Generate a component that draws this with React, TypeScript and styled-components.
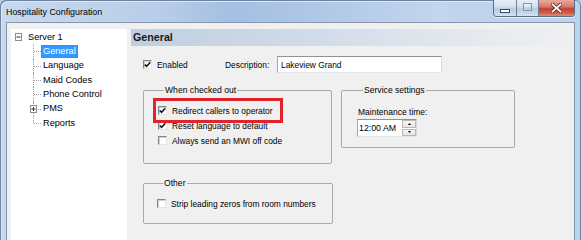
import React from 'react';
import styled, { createGlobalStyle } from 'styled-components';

const Global = createGlobalStyle`
  html, body { margin: 0; padding: 0; background: #b9cfe9; }
  body { font-family: "Liberation Sans", Arial, sans-serif; color: #000; }
  * { box-sizing: border-box; }
`;

const Window = styled.div`
  width: 581px;
  height: 240px;
  overflow: hidden;
  display: flex;
  flex-direction: column;
  padding: 0 6px;
  border-radius: 6px 6px 0 0;
  background: linear-gradient(to right, #c6d9ef 0%, #b8cde9 28%, #a3bfe2 40%, #aec6e6 52%, #c0d5ee 75%, #bcd2ed 100%);
  box-shadow: inset 1px 1px 0 #6f839c, inset -1px 0 0 #6f839c, inset 2px 2px 0 #dce8f5;
`;

const TitleBar = styled.div`
  height: 22px;
  flex: none;
  display: flex;
  align-items: flex-start;
`;

const Title = styled.div`
  padding-top: 7px;
  font-size: 8.9px;
  line-height: 10px;
  color: #000;
`;

const CaptionButtons = styled.div`
  margin-left: auto;
  display: flex;
  height: 17px;
  border: 1px solid #5d6d82;
  border-top: none;
  border-radius: 0 0 4px 4px;
  overflow: hidden;
  box-shadow: 0 1px 0 rgba(255, 255, 255, 0.6);
`;

const CapBtn = styled.div<{ $w: number; $close?: boolean }>`
  width: ${p => p.$w}px;
  display: flex;
  align-items: center;
  justify-content: center;
  background: ${p =>
    p.$close
      ? 'linear-gradient(#e8aa9e 0%, #d77a68 42%, #c4402f 55%, #cf5d48 80%, #de8c76 100%)'
      : 'linear-gradient(#e6eef8 0%, #d4e0ef 42%, #b9cbe2 55%, #c6d6ea 80%, #d6e3f2 100%)'};
  & + & { border-left: 1px solid #6e7f94; }
`;

const MinGlyph = styled.span`
  width: 10px;
  height: 4px;
  margin-top: 5px;
  background: #fff;
  border: 1px solid #3a4a5e;
`;

const MaxGlyph = styled.span`
  width: 9px;
  height: 8px;
  margin-top: -2px;
  border: 1px solid #7e8ea3;
  box-shadow: inset 0 2px 0 #e9eff7, inset 0 0 0 1px #c5d2e2;
  opacity: 0.9;
`;

const Client = styled.div`
  flex: 1;
  display: flex;
  gap: 4px;
  padding: 6px 4px 0 4px;
  background: #f0f0f0;
  border: 1px solid #8796aa;
  border-bottom: none;
`;

const Tree = styled.div`
  width: 116px;
  flex: none;
  background: #fff;
  padding-top: 1px;
  font-size: 9.2px;
`;

const TreeRow = styled.div<{ $indent?: number }>`
  height: 14.33px;
  display: flex;
  align-items: center;
  padding-left: ${p => p.$indent ?? 0}px;
`;

const Children = styled.div`
  padding-left: 22px;
`;

const Connector = styled.span<{ $last?: boolean }>`
  position: relative;
  align-self: stretch;
  width: 8px;
  flex: none;
  &::before {
    content: '';
    position: absolute;
    left: 0;
    top: 0;
    height: ${p => (p.$last ? '50%' : '100%')};
    border-left: 1px dotted #a0a0a0;
  }
  &::after {
    content: '';
    position: absolute;
    left: 1px;
    top: 50%;
    width: 7px;
    border-top: 1px dotted #a0a0a0;
  }
`;

const BoxOnLine = styled.span`
  position: absolute;
  left: -3px;
  top: 50%;
  margin-top: -4px;
  z-index: 1;
  display: flex;
`;

const TreeLabel = styled.span<{ $selected?: boolean }>`
  padding: 0 1px;
  line-height: 11px;
  white-space: nowrap;
  border: 1px ${p => (p.$selected ? 'dotted #cc6600' : 'solid transparent')};
  background: ${p => (p.$selected ? '#3399ff' : 'transparent')};
  color: ${p => (p.$selected ? '#fff' : '#000')};
`;

const RootBox = styled.span`
  display: flex;
  margin-right: 4px;
`;

const ExpandBox = ({ plus }: { plus?: boolean }) => (
  <svg width="7" height="8" viewBox="0 0 7 8">
    <rect x="0.5" y="0.5" width="6" height="7" fill="#fff" stroke="#8c8c8c" />
    <path d="M1.5 4H5.5" stroke="#333" strokeWidth="1" />
    {plus && <path d="M3.5 2V6" stroke="#333" strokeWidth="1" />}
  </svg>
);

const Content = styled.div`
  flex: 1;
  display: flex;
  flex-direction: column;
  font-size: 8.4px;
`;

const Header = styled.div`
  height: 17px;
  line-height: 17px;
  padding-left: 2px;
  font-weight: bold;
  font-size: 10.7px;
  color: #1a1a1a;
  background: linear-gradient(to right, #bfcee0 0%, #d3dde9 45%, #e8ecf0 85%, #eeeff0 100%);
`;

const TopRow = styled.div`
  margin-top: 10px;
  height: 17px;
  display: flex;
  align-items: center;
  padding-left: 12px;
`;

const CheckRow = styled.label<{ $width?: number }>`
  display: flex;
  align-items: center;
  gap: 5px;
  height: 15px;
  white-space: nowrap;
  ${p => (p.$width ? `width: ${p.$width}px;` : '')}
`;

const FieldLabel = styled.span<{ $width: number }>`
  width: ${p => p.$width}px;
  white-space: nowrap;
`;

const TextBox = styled.div`
  width: 165px;
  height: 17px;
  display: flex;
  align-items: center;
  padding-left: 3px;
  background: #fff;
  border: 1px solid;
  border-color: #8f9296 #d9dce0 #e3e7ec #a6a9ad;
`;

const GroupsRow = styled.div`
  margin-top: 12px;
  display: flex;
  align-items: flex-start;
  gap: 9px;
  padding-left: 12px;
`;

const Group = styled.fieldset<{ $w: number; $h: number; $pt: number; $pl: number }>`
  margin: 0;
  width: ${p => p.$w}px;
  height: ${p => p.$h}px;
  padding: ${p => p.$pt}px 0 0 ${p => p.$pl}px;
  border: 1px solid #a9a9a9;
  border-radius: 2px;
  min-width: 0;
`;

const Legend = styled.legend`
  margin-left: 6px;
  padding: 0 1px;
  font-size: 8.6px;
  line-height: 10px;
  height: 10px;
`;

const OtherWrap = styled.div`
  margin-top: 14px;
  padding-left: 12px;
`;

const Annotated = styled.div`
  position: relative;
`;

const RedBox = styled.div`
  position: absolute;
  left: -5px;
  top: -5px;
  width: 130px;
  height: 25px;
  border: 3px solid #e3232c;
  pointer-events: none;
`;

const Check = styled.span`
  width: 9px;
  height: 9px;
  flex: none;
  display: flex;
  align-items: center;
  justify-content: center;
  background: #fff;
  border: 1px solid;
  border-color: #868686 #e6e6e6 #e6e6e6 #868686;
  box-shadow: inset 1px 1px 0 #cfcfcf;
`;

const CheckBox = ({ checked }: { checked?: boolean }) => (
  <Check>
    {checked && (
      <svg width="7" height="7" viewBox="0 0 7 7">
        <path d="M0.8 3.4 L2.6 5.3 L6.3 1.2" fill="none" stroke="#111" strokeWidth="1.5" />
      </svg>
    )}
  </Check>
);

const SmallLabel = styled.div`
  margin-left: 1px;
  line-height: 12px;
  font-size: 8.5px;
`;

const Picker = styled.div`
  margin-top: 1px;
  width: 60px;
  height: 18px;
  display: flex;
  align-items: center;
  background: #fff;
  border: 1px solid;
  border-color: #8f9296 #d9dce0 #e3e7ec #a6a9ad;
  padding-left: 1px;
  font-size: 8.8px;
`;

const Spinner = styled.div`
  margin-left: auto;
  align-self: stretch;
  width: 14px;
  display: flex;
  flex-direction: column;
  gap: 1px;
  padding: 0 0 0 0;
`;

const SpinBtn = styled.div`
  flex: 1;
  display: flex;
  align-items: center;
  justify-content: center;
  background: linear-gradient(#f6f6f6, #e4e4e4);
  border: 1px solid #b9b9b9;
`;

const Arrow = ({ down }: { down?: boolean }) => (
  <svg width="3" height="2" viewBox="0 0 3 2">
    <path d={down ? 'M0 0H3L1.5 2Z' : 'M0 2H3L1.5 0Z'} fill="#000" />
  </svg>
);

export default function App() {
  return (
    <>
      <Global />
      <Window>
        <TitleBar>
          <Title>Hospitality Configuration</Title>
          <CaptionButtons>
            <CapBtn $w={22}>
              <MinGlyph />
            </CapBtn>
            <CapBtn $w={22}>
              <MaxGlyph />
            </CapBtn>
            <CapBtn $w={36} $close>
              <svg width="11" height="10" viewBox="0 0 11 10" style={{ marginTop: -1 }}>
                <path d="M1.5 1.5 L9.5 8.5 M9.5 1.5 L1.5 8.5" stroke="#5a2420" strokeWidth="3.4" strokeLinecap="square" />
                <path d="M1.5 1.5 L9.5 8.5 M9.5 1.5 L1.5 8.5" stroke="#fff" strokeWidth="1.8" strokeLinecap="square" />
              </svg>
            </CapBtn>
          </CaptionButtons>
        </TitleBar>
        <Client>
          <Tree>
            <TreeRow $indent={4}>
              <RootBox>
                <ExpandBox />
              </RootBox>
              <TreeLabel>Server 1</TreeLabel>
            </TreeRow>
            <Children>
              <TreeRow>
                <Connector />
                <TreeLabel $selected>General</TreeLabel>
              </TreeRow>
              <TreeRow>
                <Connector />
                <TreeLabel>Language</TreeLabel>
              </TreeRow>
              <TreeRow>
                <Connector />
                <TreeLabel>Maid Codes</TreeLabel>
              </TreeRow>
              <TreeRow>
                <Connector />
                <TreeLabel>Phone Control</TreeLabel>
              </TreeRow>
              <TreeRow>
                <Connector>
                  <BoxOnLine>
                    <ExpandBox plus />
                  </BoxOnLine>
                </Connector>
                <TreeLabel>PMS</TreeLabel>
              </TreeRow>
              <TreeRow>
                <Connector $last />
                <TreeLabel>Reports</TreeLabel>
              </TreeRow>
            </Children>
          </Tree>
          <Content>
            <Header>General</Header>
            <TopRow>
              <CheckRow $width={82}>
                <CheckBox checked />
                <span>Enabled</span>
              </CheckRow>
              <FieldLabel $width={52}>Description:</FieldLabel>
              <TextBox>Lakeview Grand</TextBox>
            </TopRow>
            <GroupsRow>
              <Group $w={189} $h={79} $pt={8} $pl={14}>
                <Legend>When checked out</Legend>
                <Annotated>
                  <CheckRow>
                    <CheckBox checked />
                    <span>Redirect callers to operator</span>
                  </CheckRow>
                  <RedBox />
                </Annotated>
                <CheckRow>
                  <CheckBox checked />
                  <span>Reset language to default</span>
                </CheckRow>
                <CheckRow>
                  <CheckBox />
                  <span>Always send an MWI off code</span>
                </CheckRow>
              </Group>
              <Group $w={174} $h={63} $pt={11} $pl={15}>
                <Legend>Service settings</Legend>
                <SmallLabel>Maintenance time:</SmallLabel>
                <Picker>
                  <span>12:00 AM</span>
                  <Spinner>
                    <SpinBtn>
                      <Arrow />
                    </SpinBtn>
                    <SpinBtn>
                      <Arrow down />
                    </SpinBtn>
                  </Spinner>
                </Picker>
              </Group>
            </GroupsRow>
            <OtherWrap>
              <Group $w={190} $h={46} $pt={8} $pl={13}>
                <Legend>Other</Legend>
                <CheckRow>
                  <CheckBox />
                  <span>Strip leading zeros from room numbers</span>
                </CheckRow>
              </Group>
            </OtherWrap>
          </Content>
        </Client>
      </Window>
    </>
  );
}
